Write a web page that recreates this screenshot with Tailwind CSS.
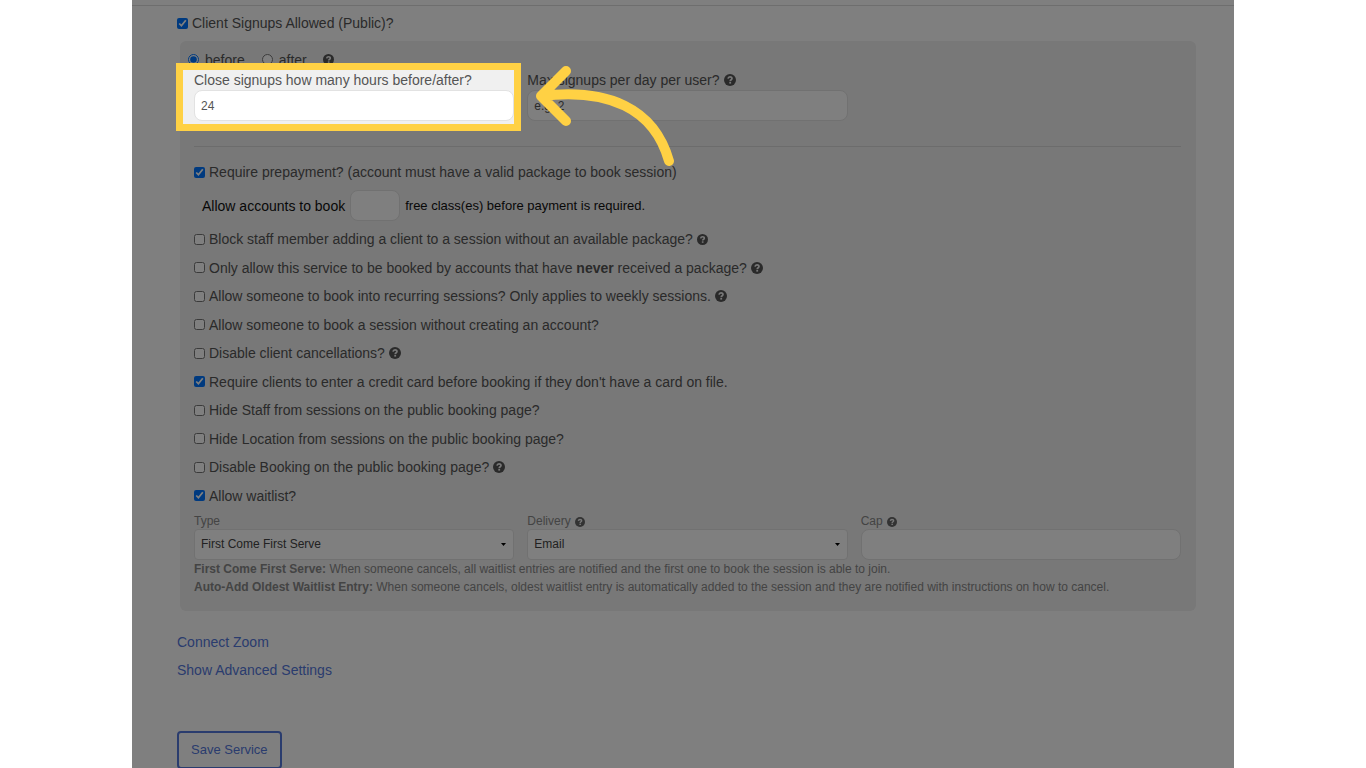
<!DOCTYPE html>
<html lang="en">
<head>
  <meta charset="UTF-8" />
  <meta name="viewport" content="width=device-width, initial-scale=1.0"/>
  <title>Service Settings</title>
  <script src="https://cdn.jsdelivr.net/npm/@tailwindcss/browser@4"></script>
</head>
<body class="bg-white text-[#555] font-['Liberation_Sans',Arial,sans-serif] text-[14px] leading-5 overflow-hidden">
  <svg class="hidden">
    <symbol id="help" viewBox="0 0 12 12">
      <circle cx="6" cy="6" r="6" fill="currentColor"/>
      <path d="M4 4.700C4.200 3.500 5 2.900 6 2.900c1.200 0 2 .700 2 1.700C8 5.800 6.200 5.700 6.200 7.200" fill="none" stroke="#f0f0f0" stroke-width="1.700"/>
      <rect x="5.300" y="8" width="1.800" height="1.600" fill="#f0f0f0"/>
    </symbol>
  </svg>

  <main class="relative mx-auto max-w-[1102px] h-screen overflow-hidden bg-white">
    <form>
      <div class="h-[6px] border-b border-[#ddd]"></div>
      <div class="pl-[45px] pr-[38px]">
        <label class="flex items-center gap-1 mt-[7px]">
          <input type="checkbox" checked class="size-[11px] accent-[#0075ff]" />
          Client Signups Allowed (Public)?
        </label>

        <section class="mt-2 ml-[3px] rounded-md bg-[#f0f0f0] pl-[14px] pr-[15px] pt-2 pb-[15px]">
          <div class="flex items-center h-[21px] -ml-[6px]">
            <label class="flex items-center gap-[6px]"><input type="radio" name="when" checked class="size-[11px] accent-[#0075ff]" />before</label>
            <label class="flex items-center gap-[6px] ml-[17px]"><input type="radio" name="when" class="size-[11px]" />after</label>
            <svg class="size-[11px] ml-4"><use href="#help"/></svg>
          </div>
          <div class="grid grid-cols-3 gap-[13px]">
            <div class="relative">
              <label for="hours" class="block">Close signups how many hours before/after?</label>
              <input id="hours" type="text" value="24" class="block w-full h-[31px] rounded-lg border border-[#e2e2e2] bg-white px-[6px] text-[12px]" />
              <!-- Spotlight: dims everything around the field -->
              <div class="absolute -top-[7px] -left-[18px] -right-[7px] -bottom-[10px] z-10 border-[7px] border-[#ffd144] shadow-[0_0_0_2000px_rgba(0,0,0,0.5)] pointer-events-none"></div>
            </div>
            <div class="relative">
              <label for="max" class="flex items-center gap-1">Max signups per day per user? <svg class="size-3"><use href="#help"/></svg></label>
              <input id="max" type="text" placeholder="e.g. 2" class="block w-full h-[31px] rounded-lg border border-[#e2e2e2] bg-white px-[6px] text-[12px] placeholder:text-[#555]" />
              <svg class="absolute left-[6px] -top-[7px] z-20 w-[144px] h-[104px] pointer-events-none" viewBox="0 0 144 104" fill="none" stroke="#ffd144" stroke-width="10" stroke-linecap="round" stroke-linejoin="round">
                <path d="M33 8 8 33l25 25M8 33C75 25 121 45 136 98"/>
              </svg>
            </div>
          </div>
          <hr class="mt-[25px] mb-[15px] border-[#d8d8d8]" />
          <label class="flex items-center gap-1"><input type="checkbox" checked class="size-[11px] accent-[#0075ff]" />Require prepayment? (account must have a valid package to book session)</label>
          <div class="flex items-center my-2 pl-2 text-[#111]">
            <label for="free">Allow accounts to book</label>
            <input id="free" type="text" class="w-[50px] h-[31px] mx-[5px] rounded-lg border border-[#e2e2e2] bg-white px-[6px] text-[12px]" />
            <span class="text-[13px]">free class(es) before payment is required.</span>
          </div>
          <div class="flex flex-col justify-between h-[277px]">
            <label class="flex items-center gap-1"><input type="checkbox" class="size-[11px]" />Block staff member adding a client to a session without an available package? <svg class="size-[11px]"><use href="#help"/></svg></label>
            <label class="flex items-center gap-1"><input type="checkbox" class="size-[11px]" /><span>Only allow this service to be booked by accounts that have <b>never</b> received a package?</span> <svg class="size-3"><use href="#help"/></svg></label>
            <label class="flex items-center gap-1"><input type="checkbox" class="size-[11px]" />Allow someone to book into recurring sessions? Only applies to weekly sessions. <svg class="size-3"><use href="#help"/></svg></label>
            <label class="flex items-center gap-1"><input type="checkbox" class="size-[11px]" />Allow someone to book a session without creating an account?</label>
            <label class="flex items-center gap-1"><input type="checkbox" class="size-[11px]" />Disable client cancellations? <svg class="size-3"><use href="#help"/></svg></label>
            <label class="flex items-center gap-1"><input type="checkbox" checked class="size-[11px] accent-[#0075ff]" />Require clients to enter a credit card before booking if they don't have a card on file.</label>
            <label class="flex items-center gap-1"><input type="checkbox" class="size-[11px]" />Hide Staff from sessions on the public booking page?</label>
            <label class="flex items-center gap-1"><input type="checkbox" class="size-[11px]" />Hide Location from sessions on the public booking page?</label>
            <label class="flex items-center gap-1"><input type="checkbox" class="size-[11px]" />Disable Booking on the public booking page? <svg class="size-3"><use href="#help"/></svg></label>
            <label class="flex items-center gap-1"><input type="checkbox" checked class="size-[11px] accent-[#0075ff]" />Allow waitlist?</label>
          </div>
          <div class="grid grid-cols-3 gap-[13px] mt-2 text-[12px] leading-[15px] text-[#888]">
            <div>
              <label for="type" class="block">Type</label>
              <div class="relative">
                <select id="type" class="block appearance-none w-full h-[31px] rounded-sm border border-[#e2e2e2] bg-white px-[6px] text-[#444]"><option>First Come First Serve</option></select>
                <svg class="absolute right-2 top-[14px] w-[5px] h-[3px]" viewBox="0 0 5 3"><path d="M0 0h5L2.500 3z" fill="#000"/></svg>
              </div>
            </div>
            <div>
              <label for="delivery" class="flex items-center gap-1">Delivery <svg class="size-[10px] text-[#666]"><use href="#help"/></svg></label>
              <div class="relative">
                <select id="delivery" class="block appearance-none w-full h-[31px] rounded-sm border border-[#e2e2e2] bg-white px-[6px] text-[#444]"><option>Email</option></select>
                <svg class="absolute right-2 top-[14px] w-[5px] h-[3px]" viewBox="0 0 5 3"><path d="M0 0h5L2.500 3z" fill="#000"/></svg>
              </div>
            </div>
            <div>
              <label for="cap" class="flex items-center gap-1">Cap <svg class="size-[10px] text-[#666]"><use href="#help"/></svg></label>
              <input id="cap" type="text" class="block w-full h-[31px] rounded-lg border border-[#e2e2e2] bg-white px-[6px]" />
            </div>
          </div>
          <div class="text-[12px] leading-[18px] text-[#888]">
            <p><b>First Come First Serve:</b> When someone cancels, all waitlist entries are notified and the first one to book the session is able to join.</p>
            <p><b>Auto-Add Oldest Waitlist Entry:</b> When someone cancels, oldest waitlist entry is automatically added to the session and they are notified with instructions on how to cancel.</p>
          </div>
        </section>

        <div class="flex flex-col items-start gap-2 mt-[21px] text-[#5478dc]">
          <a href="#">Connect Zoom</a>
          <a href="#">Show Advanced Settings</a>
        </div>
        <button type="submit" class="mt-[51px] h-[38px] px-3 rounded-sm border-2 border-[#5478dc] text-[#5478dc] text-[13px]">Save Service</button>
      </div>
    </form>
  </main>
</body>
</html>
